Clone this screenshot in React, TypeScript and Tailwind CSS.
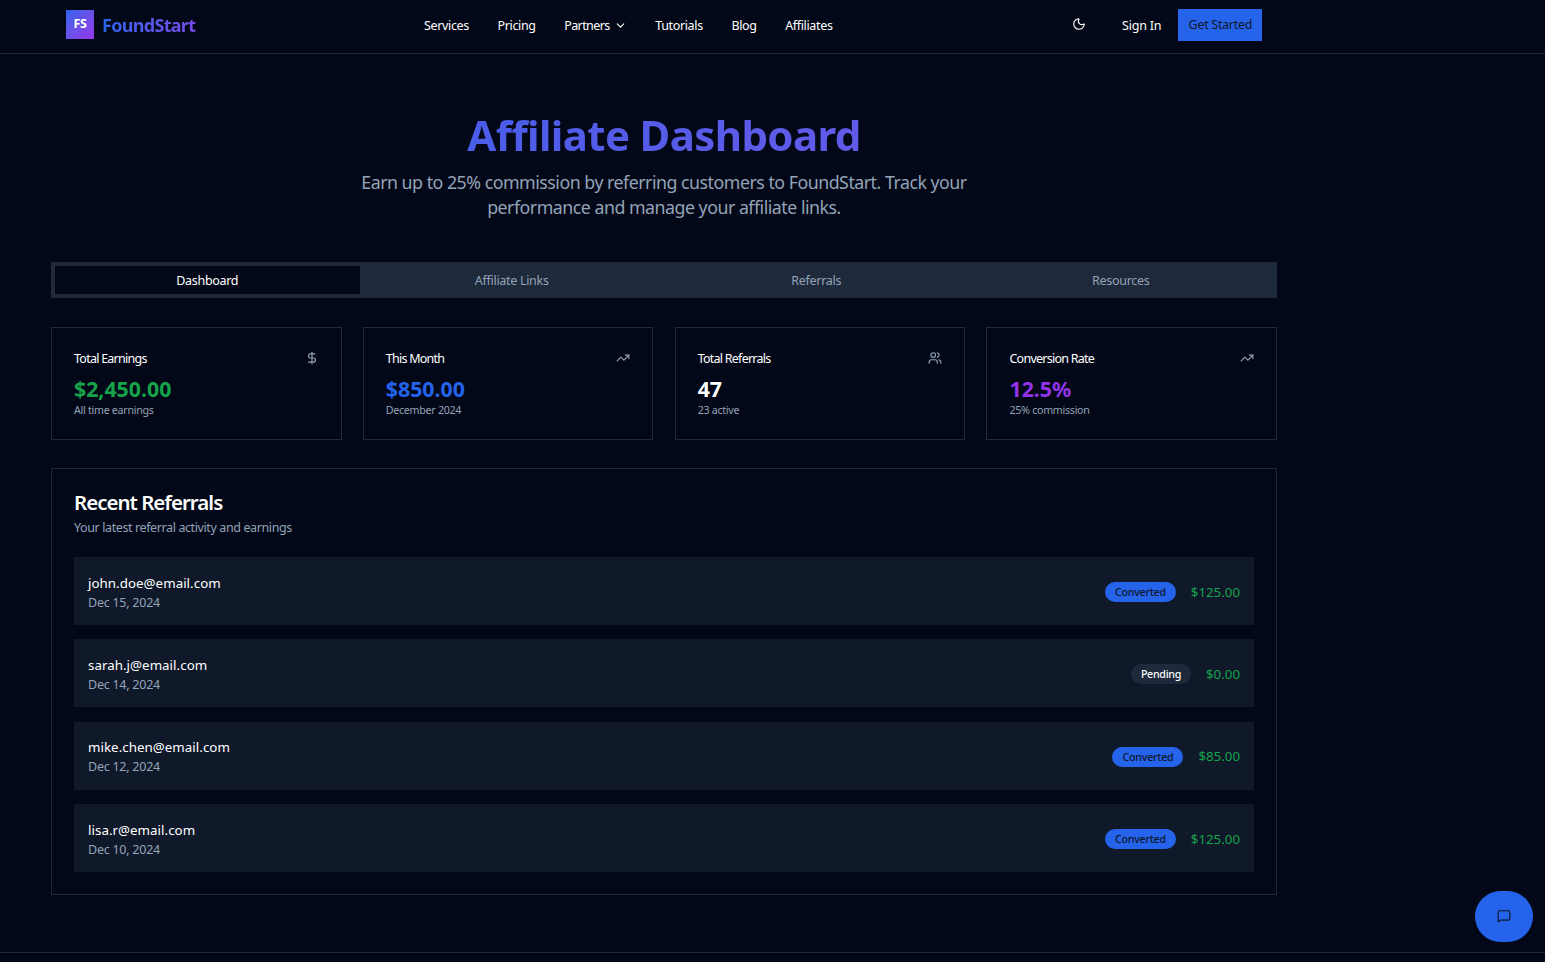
import { ChevronDown, DollarSign, MessageSquare, Moon, TrendingUp, Users } from 'lucide-react';

const navItems = ['Services', 'Pricing', 'Partners', 'Tutorials', 'Blog', 'Affiliates'];
const tabs = ['Dashboard', 'Affiliate Links', 'Referrals', 'Resources'];

const stats = [
  { label: 'Total Earnings', value: '$2,450.00', note: 'All time earnings', color: 'text-[#16a34a]', icon: DollarSign },
  { label: 'This Month', value: '$850.00', note: 'December 2024', color: 'text-[#2563eb]', icon: TrendingUp },
  { label: 'Total Referrals', value: '47', note: '23 active', color: 'text-white', icon: Users },
  { label: 'Conversion Rate', value: '12.5%', note: '25% commission', color: 'text-[#9333ea]', icon: TrendingUp },
];

const referrals = [
  { email: 'john.doe@email.com', date: 'Dec 15, 2024', status: 'Converted', amount: '$125.00' },
  { email: 'sarah.j@email.com', date: 'Dec 14, 2024', status: 'Pending', amount: '$0.00' },
  { email: 'mike.chen@email.com', date: 'Dec 12, 2024', status: 'Converted', amount: '$85.00' },
  { email: 'lisa.r@email.com', date: 'Dec 10, 2024', status: 'Converted', amount: '$125.00' },
];

export default function App() {
  return (
    <div className="relative h-[962px] overflow-hidden bg-[#020817] font-['Noto_Sans',sans-serif] text-white">
      {/* Header */}
      <header className="flex h-[54px] items-start border-b border-[#1e293b] pt-[9px] pl-[66px]">
        <div className="mt-[1px] flex w-[358px] items-center gap-2">
          <div className="flex h-[29px] w-[28px] items-center justify-center bg-gradient-to-br from-[#2563eb] to-[#9333ea] text-[12.5px] font-bold tracking-[-0.3px]">
            FS
          </div>
          <span className="w-[150px] bg-gradient-to-r from-[#2563eb] to-[#9333ea] bg-clip-text pt-[1px] text-[18px] font-bold tracking-[-0.7px] text-transparent">
            FoundStart
          </span>
        </div>
        <nav className="mt-[8px] flex w-[648px] items-center gap-[28.6px] text-[12.5px] leading-[18px] tracking-[-0.35px]">
          {navItems.map((item) => (
            <span key={item} className="flex items-center gap-[4px]">
              {item === 'Partners' ? <span className="tracking-[-0.6px]">{item}</span> : item}
              {item === 'Partners' && <ChevronDown className="h-[13px] w-[13px] -translate-y-px" />}
            </span>
          ))}
        </nav>
        <Moon className="mt-[8px] h-[14px] w-[14px]" />
        <span className="mt-[8px] ml-[36px] text-[12.5px] leading-[18px] tracking-[-0.2px]">Sign In</span>
        <button className="ml-[17px] h-[32px] w-[84px] bg-[#2563eb] text-[12.5px] tracking-[-0.3px] text-[#0f172a]">Get Started</button>
      </header>

      <main className="ml-[51px] w-[1226px]">
        {/* Title */}
        <div className="flex flex-col items-center pt-[53px]">
          <h1 className="bg-gradient-to-r from-[#4a5de9] to-[#625ae8] bg-clip-text text-center text-[42px] leading-[56px] font-bold tracking-[-0.63px] text-transparent">
            Affiliate Dashboard
          </h1>
          <p className="mt-[7px] w-[640px] text-center text-[17.8px] leading-[25px] tracking-[-0.5px] text-[#94a3b8]">
            Earn up to 25% commission by referring customers to FoundStart. Track your performance and manage your affiliate links.
          </p>
        </div>

        {/* Tabs */}
        <div className="mt-[42px] grid h-[36px] grid-cols-4 bg-[#1e293b] p-[4px] text-[12.5px] tracking-[-0.3px] text-[#94a3b8]">
          {tabs.map((tab, i) => (
            <div key={tab} className={i === 0 ? 'flex items-center justify-center bg-[#020817] pt-[2px] text-white' : 'flex items-center justify-center pt-[2px]'}>
              {tab}
            </div>
          ))}
        </div>

        {/* Stat cards */}
        <div className="mt-[29px] grid grid-cols-4 gap-[21.3px]">
          {stats.map((stat) => {
            const Icon = stat.icon;
            return (
              <div key={stat.label} className="h-[113px] border border-[#1e293b] px-[22px] pt-[22px]">
                <div className="flex items-center justify-between">
                  <span className="text-[12.5px] leading-[18px] tracking-[-0.75px]">{stat.label}</span>
                  <Icon className="-mt-[2px] h-[14px] w-[14px] text-[#94a3b8]" />
                </div>
                <div className={`mt-[7px] text-[21.3px] leading-[28px] font-bold ${stat.color}`}>{stat.value}</div>
                <div className="text-[10.7px] leading-[15px] tracking-[-0.3px] text-[#94a3b8]">{stat.note}</div>
              </div>
            );
          })}
        </div>

        {/* Recent referrals */}
        <section className="mt-[28px] h-[427px] border border-[#1e293b] px-[22px] pt-[19px]">
          <h2 className="text-[20.5px] leading-[28px] font-semibold tracking-[-1px]">Recent Referrals</h2>
          <p className="mt-[3px] text-[12.5px] leading-[18px] tracking-[-0.39px] text-[#94a3b8]">Your latest referral activity and earnings</p>
          <div className="mt-[20px] flex flex-col gap-[14.4px]">
            {referrals.map((row) => (
              <div key={row.email} className="flex h-[68px] items-center justify-between bg-[#0f192a] px-[14px] pt-[2px]">
                <div>
                  <div className="text-[13.3px] leading-[20px] tracking-[0.05px]">{row.email}</div>
                  <div className="mt-[1px] text-[12.5px] leading-[18px] tracking-[-0.25px] text-[#94a3b8]">{row.date}</div>
                </div>
                <div className="flex items-center gap-[15px]">
                  <span
                    className={
                      row.status === 'Converted'
                        ? 'flex h-[20px] items-center rounded-full bg-[#2563eb] px-[10px] text-[10.7px] font-medium tracking-[-0.25px] text-[#0f172a]'
                        : 'flex h-[20px] items-center rounded-full bg-[#1e293b] px-[10px] text-[10.7px] font-medium tracking-[-0.3px] text-[#f8fafc]'
                    }
                  >
                    {row.status}
                  </span>
                  <span className="pt-[1px] text-[13.3px] text-[#16a34a]">{row.amount}</span>
                </div>
              </div>
            ))}
          </div>
        </section>
      </main>

      {/* Chat button */}
      <button className="absolute top-[891px] left-[1475px] flex h-[51px] w-[58px] items-center justify-center rounded-full bg-[#2563eb] text-[#0f172a]">
        <MessageSquare className="h-[14px] w-[14px] -translate-y-px" />
      </button>

      {/* Footer edge */}
      <div className="absolute top-[952px] h-px w-full bg-[#1e293b]" />
    </div>
  );
}
